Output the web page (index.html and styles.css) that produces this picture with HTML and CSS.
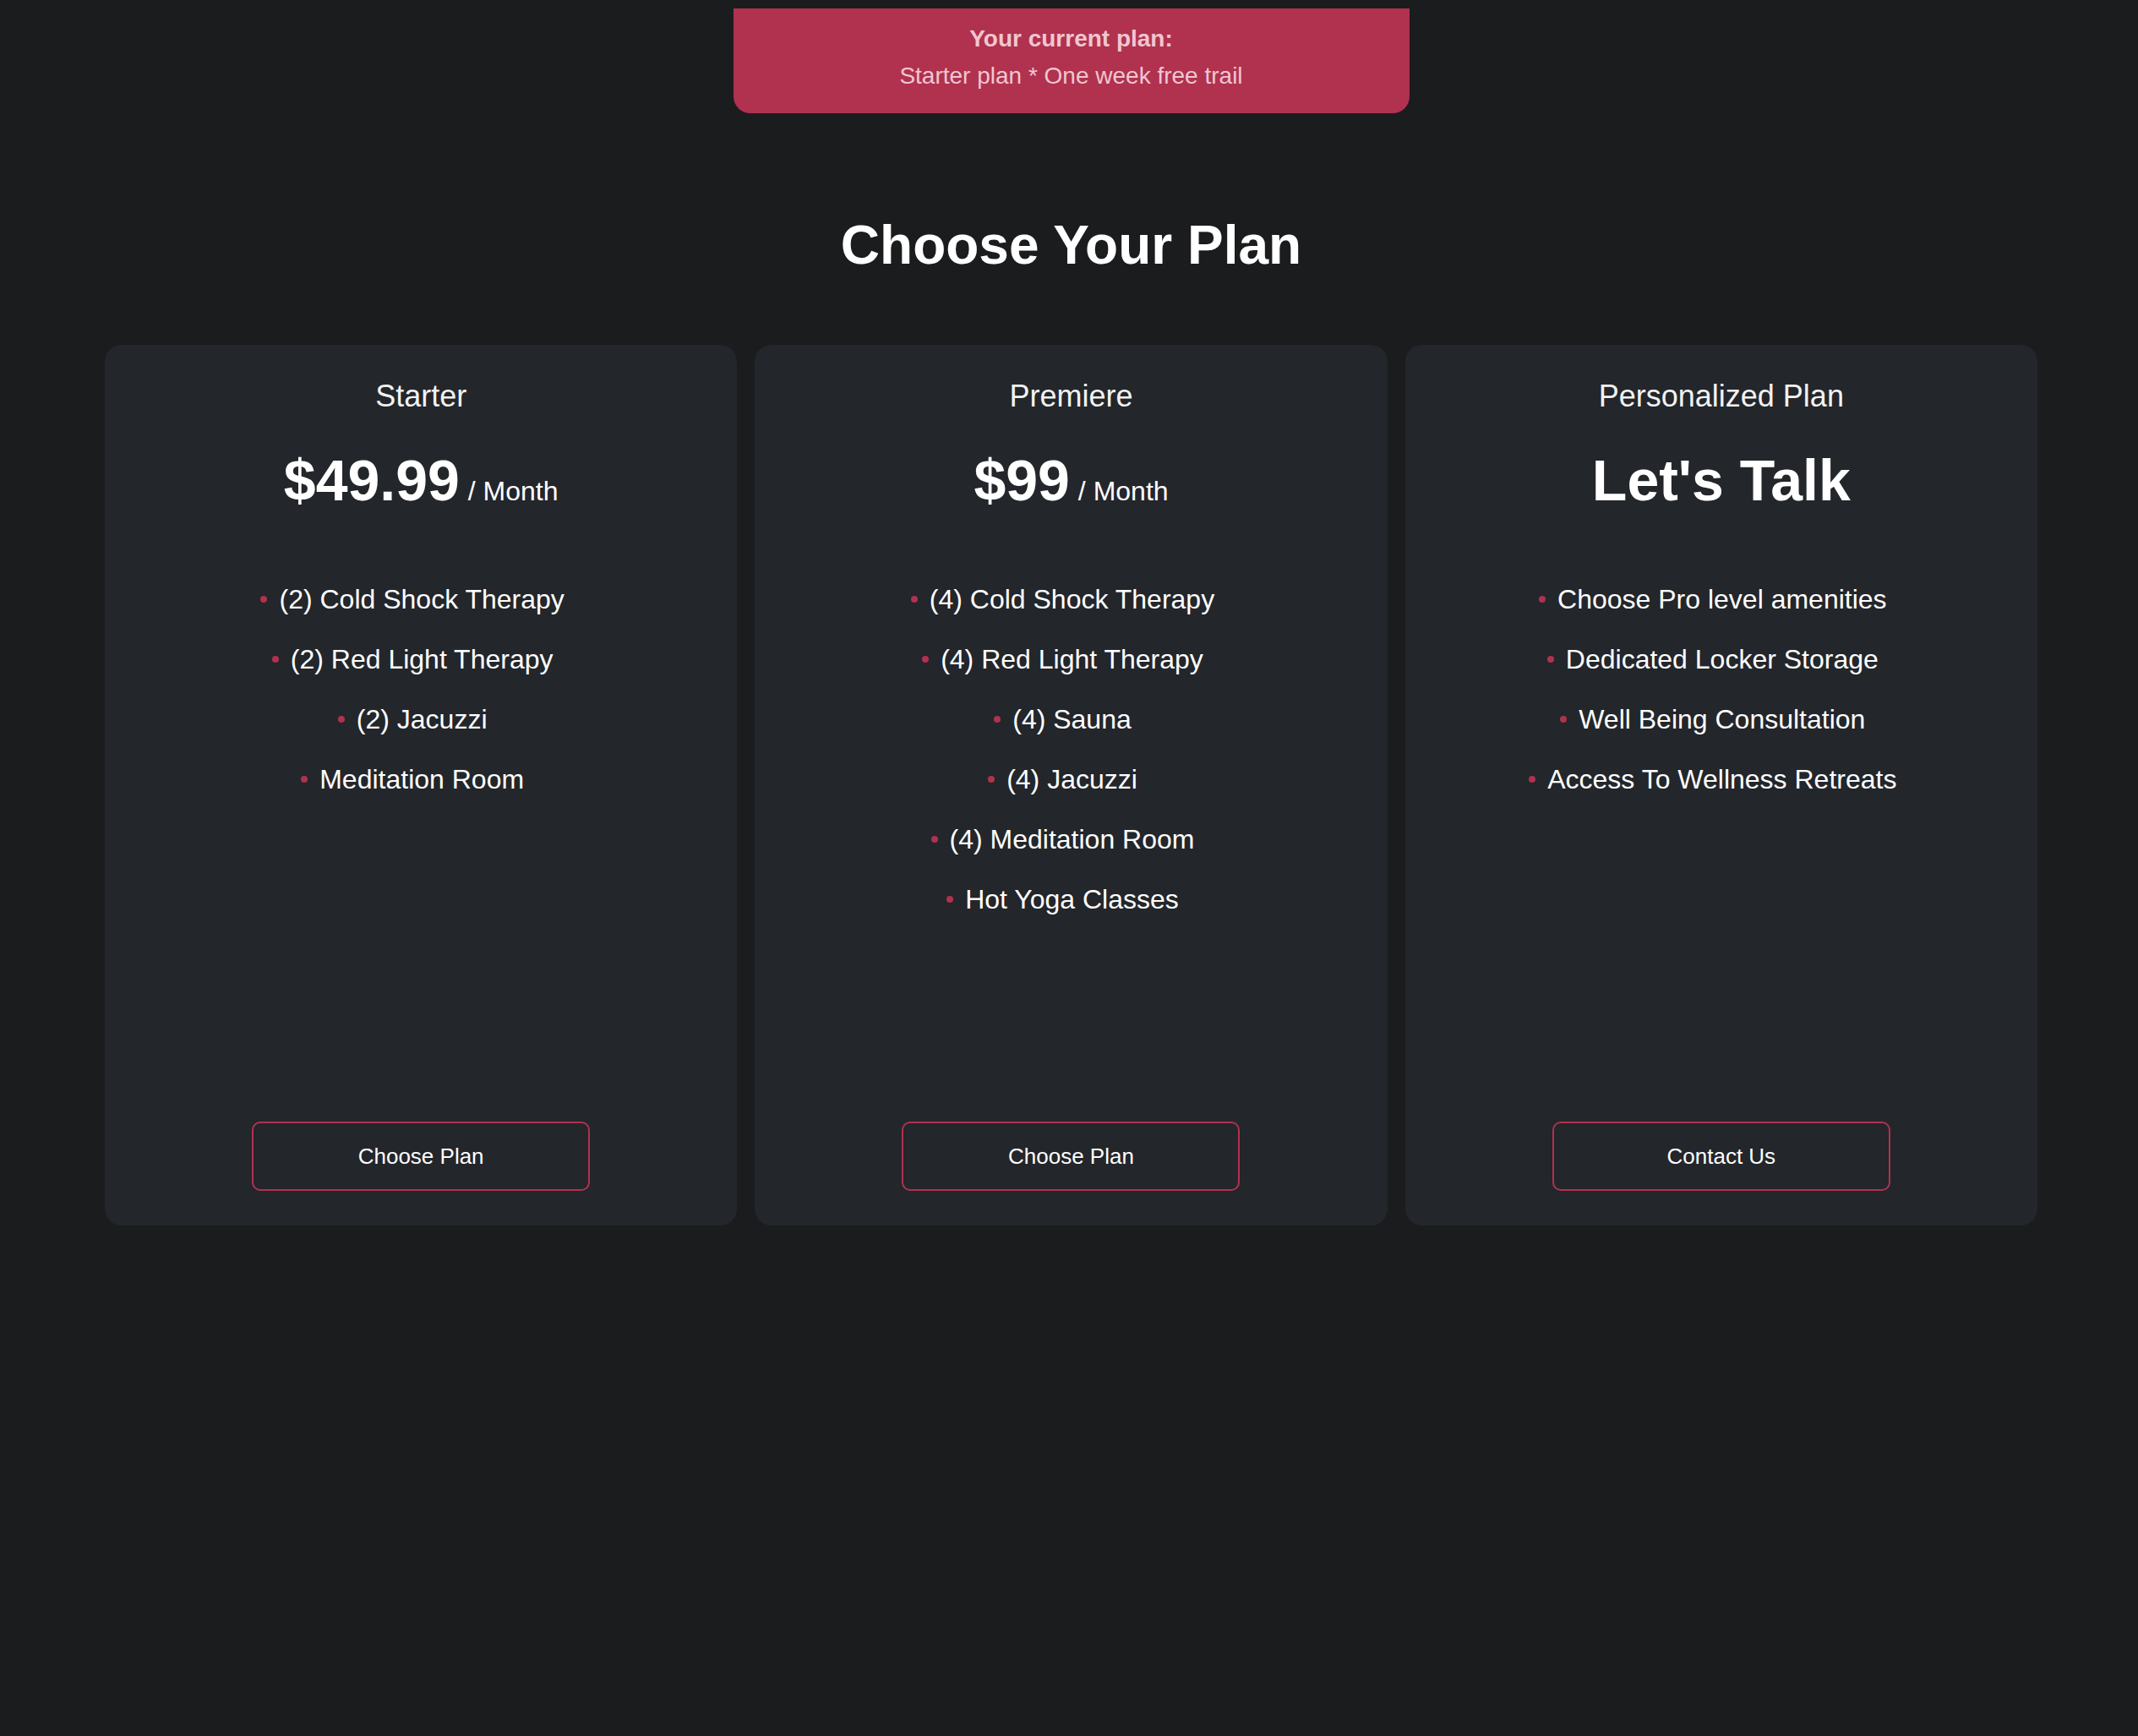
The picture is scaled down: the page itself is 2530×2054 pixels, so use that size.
FILE: index.html
```html
<!DOCTYPE html>
<html lang="en">
<head>
<meta charset="utf-8">
<title>Choose Your Plan</title>
<link rel="stylesheet" href="styles.css">
</head>
<body>
<main class="page">
  <div class="current-plan">
    <p class="current-plan__label">Your current plan:</p>
    <p class="current-plan__value">Starter plan * One week free trail</p>
  </div>

  <h1 class="page-title">Choose Your Plan</h1>

  <section class="plans">
    <article class="plan">
      <h2 class="plan__name">Starter</h2>
      <div class="plan__price"><span class="plan__amount">$49.99</span><span class="plan__period">/ Month</span></div>
      <ul class="plan__features">
        <li class="plan__feature"><span class="dot"></span>(2) Cold Shock Therapy</li>
        <li class="plan__feature"><span class="dot"></span>(2) Red Light Therapy</li>
        <li class="plan__feature"><span class="dot"></span>(2) Jacuzzi</li>
        <li class="plan__feature"><span class="dot"></span>Meditation Room</li>
      </ul>
      <button class="plan__button">Choose Plan</button>
    </article>

    <article class="plan">
      <h2 class="plan__name">Premiere</h2>
      <div class="plan__price"><span class="plan__amount">$99</span><span class="plan__period">/ Month</span></div>
      <ul class="plan__features">
        <li class="plan__feature"><span class="dot"></span>(4) Cold Shock Therapy</li>
        <li class="plan__feature"><span class="dot"></span>(4) Red Light Therapy</li>
        <li class="plan__feature"><span class="dot"></span>(4) Sauna</li>
        <li class="plan__feature"><span class="dot"></span>(4) Jacuzzi</li>
        <li class="plan__feature"><span class="dot"></span>(4) Meditation Room</li>
        <li class="plan__feature"><span class="dot"></span>Hot Yoga Classes</li>
      </ul>
      <button class="plan__button">Choose Plan</button>
    </article>

    <article class="plan">
      <h2 class="plan__name">Personalized Plan</h2>
      <div class="plan__price"><span class="plan__amount">Let's Talk</span></div>
      <ul class="plan__features">
        <li class="plan__feature"><span class="dot"></span>Choose Pro level amenities</li>
        <li class="plan__feature"><span class="dot"></span>Dedicated Locker Storage</li>
        <li class="plan__feature"><span class="dot"></span>Well Being Consultation</li>
        <li class="plan__feature"><span class="dot"></span>Access To Wellness Retreats</li>
      </ul>
      <button class="plan__button">Contact Us</button>
    </article>
  </section>
</main>
</body>
</html>
```

FILE: styles.css
```css
* { box-sizing: border-box; }

html, body {
  margin: 0;
  padding: 0;
  background: #1b1c1e;
  min-height: 100%;
}

body {
  font-family: "Liberation Sans", Arial, Helvetica, sans-serif;
  color: #ffffff;
}

.page {
  padding: 10px 119px 0 124px;
  display: flex;
  flex-direction: column;
  align-items: center;
}

.current-plan {
  width: 800px;
  background: #b0324e;
  border-radius: 0 0 20px 20px;
  padding: 14px 0 22px;
  text-align: center;
  color: #f1c6d1;
}

.current-plan__label {
  margin: 0;
  font-size: 28px;
  line-height: 44px;
  font-weight: 700;
}

.current-plan__value {
  margin: 0;
  font-size: 28px;
  line-height: 44px;
  font-weight: 400;
}

.page-title {
  margin: 118px 0 80px;
  font-size: 64px;
  line-height: 76px;
  font-weight: 700;
  color: #ffffff;
}

.plans {
  width: 100%;
  display: grid;
  grid-template-columns: repeat(3, 1fr);
  gap: 21px;
}

.plan {
  background: #23262b;
  border-radius: 20px;
  min-height: 1042px;
  padding: 40px 20px 41px;
  display: flex;
  flex-direction: column;
  align-items: center;
}

.plan__name {
  margin: 0;
  font-size: 36px;
  line-height: 42px;
  font-weight: 400;
  color: #f2f2f2;
}

.plan__price {
  margin-top: 38px;
  height: 80px;
  line-height: 80px;
  white-space: nowrap;
}

.plan__amount {
  font-size: 68px;
  font-weight: 700;
  color: #ffffff;
}

.plan__period {
  font-size: 32px;
  margin-left: 10px;
  color: #ffffff;
}

.plan__features {
  list-style: none;
  margin: 66px 0 0;
  padding: 0 20px 0 0;
  text-align: center;
}

.plan__feature {
  font-size: 32px;
  line-height: 71px;
  color: #ffffff;
}

.dot {
  display: inline-block;
  width: 8px;
  height: 8px;
  border-radius: 50%;
  background: #b0324e;
  vertical-align: middle;
  margin: 0 14px 6px 0;
}

.plan__button {
  margin-top: auto;
  width: 400px;
  height: 82px;
  background: transparent;
  border: 2px solid #b0324e;
  border-radius: 10px;
  color: #ffffff;
  font-family: "Liberation Sans", Arial, Helvetica, sans-serif;
  font-size: 26px;
  cursor: pointer;
}
```
